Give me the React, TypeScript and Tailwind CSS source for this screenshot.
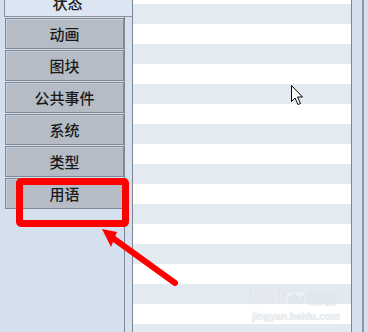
import React from "react";

const tabs = ["动画", "图块", "公共事件", "系统", "类型", "用语"];

export default function App() {
  const rows = Array.from({ length: 17 }, (_, i) => i);
  return (
    <div
      className="relative w-[368px] h-[332px] overflow-hidden bg-[#d4e0ee] flex"
      style={{ fontFamily: '"Noto Sans CJK SC", "Noto Sans", sans-serif' }}
    >
      {/* left column */}
      <div className="w-[132px] h-full flex flex-col">
        <div className="ml-[4px] h-[17px] border-l border-b border-[#8a94a1] bg-[#dce6f2] overflow-hidden flex justify-center">
          <span className="block text-[15px] font-medium leading-[15px] mt-[-5px] text-[#1a1a1a] pr-[2px]">状态</span>
        </div>
        <div className="flex-1 w-[125px] border-r border-[#7f8894] pl-[5px] pt-[1px] flex flex-col gap-[1px]">
          {tabs.map((t) => (
            <div
              key={t}
              className="h-[31px] w-[119px] border border-[#7f8894] bg-[#b5bcc6] shadow-[inset_1px_1px_0_#c9d0d8] flex items-center justify-center pt-[2px] text-[15px] font-medium text-[#1a1a1a]"
            >
              {t}
            </div>
          ))}
        </div>
      </div>
      {/* list panel */}
      <div className="w-[220px] h-full border-l border-r border-[#7d8693] flex flex-col">
        <div className="h-[4px] bg-white shrink-0" />
        {rows.map((i) => (
          <div key={i} className={`h-[20px] shrink-0 ${i % 2 === 0 ? "bg-[#e3eaf2]" : "bg-white"}`} />
        ))}
      </div>
      <div className="w-[10px] h-full bg-[#d4e0ee]" />
      <div className="w-[2px] h-full bg-[#8f99a6]" />
      <div className="flex-1 h-full bg-[#d4e0ee]" />

      {/* red highlight box */}
      <div className="absolute left-[16px] top-[178px] w-[113px] h-[49px] border-[7px] border-[#ff0000] rounded-[5px]" />

      {/* arrow */}
      <svg className="absolute left-0 top-0" width="368" height="332" viewBox="0 0 368 332">
        <line x1="175" y1="283" x2="110" y2="236" stroke="#ff0000" strokeWidth="6" strokeLinecap="round" />
        <polygon points="102,229 117,232 111,247" fill="#ff0000" />
        {/* cursor */}
        <path
          d="M291.5 85.5 L291.5 101.5 L295 98 L298 104.5 L300.5 103.5 L297.5 97 L302.5 97 Z"
          fill="#ffffff"
          stroke="#000000"
          strokeWidth="1"
          strokeLinejoin="miter"
        />
      </svg>

      {/* watermark */}
      <div className="absolute left-[250px] top-[284px] flex items-end text-[22px] font-bold leading-none text-white/60 [text-shadow:0_0_1px_#c4ccd5]" style={{ fontFamily: '"Liberation Sans", "Noto Sans CJK SC", sans-serif' }}>
        <span>Bai</span>
        <span className="ml-[2px] rounded-[6px] bg-white/40 px-[1px] text-[14px] text-[#e3e9f0]">du</span>
        <span className="ml-[2px] text-[15px] font-medium">经验</span>
      </div>
      <div className="absolute left-[252px] top-[309px] text-[10px] font-bold text-white/60 [text-shadow:0_0_1px_#c4ccd5]" style={{ fontFamily: '"Liberation Sans", sans-serif' }}>
        jingyan.baidu.com
      </div>
    </div>
  );
}
